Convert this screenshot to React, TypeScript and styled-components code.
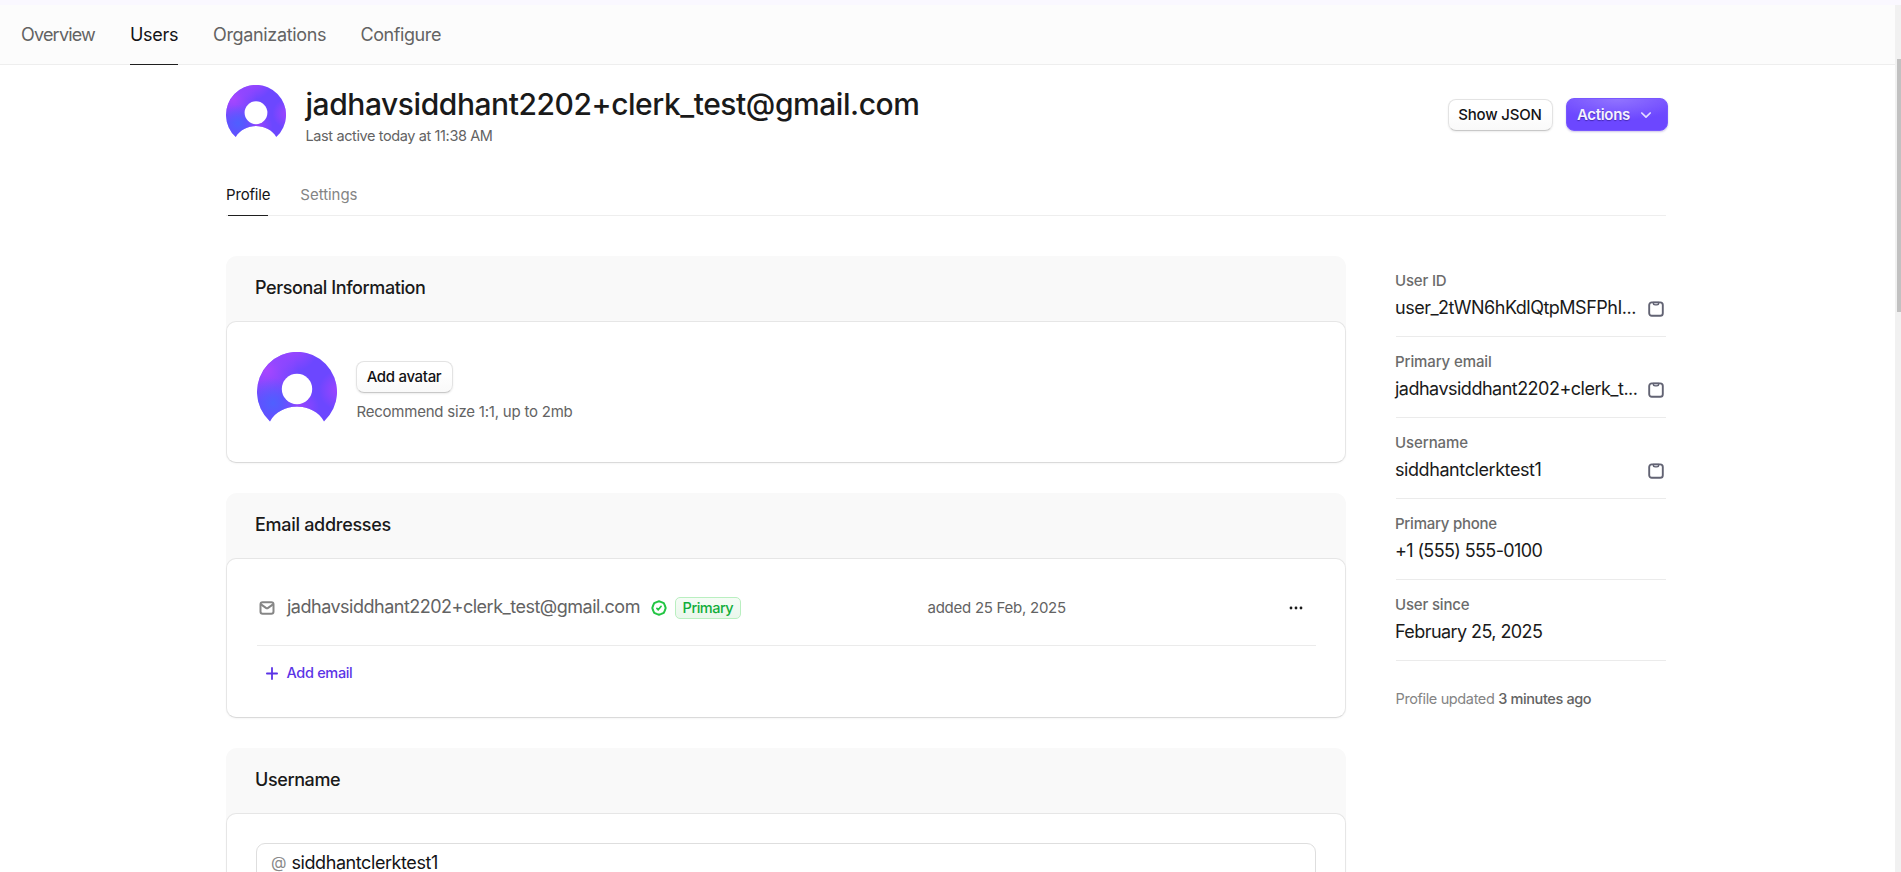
import React, { useId } from 'react';
import styled, { createGlobalStyle } from 'styled-components';

const GlobalStyle = createGlobalStyle`
  *, *::before, *::after { box-sizing: border-box; }
  html, body { margin: 0; height: 100%; overflow: hidden; }
  body {
    background: #fff;
    color: #1a1a1a;
    font-family: Inter, "Liberation Sans", sans-serif;
  }
  button { font-family: inherit; }
`;

interface Tracked {
  $track?: number;
}

const Screen = styled.div`
  display: flex;
  flex-direction: column;
  height: 872px;
  overflow: hidden;
`;

const TopStrip = styled.div`
  flex: none;
  height: 5px;
  background: #faf8ff;
`;

const Viewport = styled.div`
  flex: 1;
  min-height: 0;
  display: flex;
`;

const Page = styled.div`
  flex: 1;
  min-width: 0;
  overflow: hidden;
`;

const ScrollTrack = styled.div`
  flex: none;
  width: 6px;
  padding: 54px 0 0 2px;
  background: #f1f1f1;
`;

const ScrollThumb = styled.div`
  height: 253px;
  background: #c1c1c1;
`;

const NavBar = styled.nav`
  display: flex;
  gap: 35px;
  height: 60px;
  padding-left: 21px;
  background: #fcfcfc;
  border-bottom: 1px solid #eeeeee;
`;

const NavLink = styled.a<Tracked & { $active?: boolean; $width: number }>`
  display: flex;
  align-items: center;
  width: ${(p) => p.$width}px;
  height: 60px;
  padding-bottom: 1px;
  border-bottom: 1px solid ${(p) => (p.$active ? '#1f1f1f' : 'transparent')};
  color: ${(p) => (p.$active ? '#131316' : '#636363')};
  font-size: 18px;
  letter-spacing: ${(p) => p.$track ?? 0}px;
  white-space: nowrap;
`;

const Content = styled.main`
  width: 1440px;
  margin-left: 226px;
  padding-top: 20px;
`;

const ProfileHeader = styled.header`
  display: flex;
  align-items: flex-start;
  height: 100px;
`;

const Identity = styled.div`
  flex: 1;
  padding: 1px 0 0 19.5px;
`;

const Title = styled.h1`
  margin: 0;
  font-size: 30px;
  font-weight: 500;
  line-height: 36px;
  letter-spacing: -0.44px;
`;

const LastActive = styled.p`
  margin: 4px 0 0;
  color: #636363;
  font-size: 14.5px;
  line-height: 20px;
  letter-spacing: -0.386px;
`;

const HeaderActions = styled.div`
  display: flex;
  gap: 13px;
  margin: 13px -2px 0 0;
`;

const OutlineButton = styled.button<Tracked & { $width: number }>`
  display: flex;
  align-items: center;
  justify-content: center;
  width: ${(p) => p.$width}px;
  height: 32px;
  margin-top: 1px;
  padding: 0 1px 1px 0;
  border: 1px solid #e3e3e3;
  border-bottom-color: #c8c8c8;
  border-radius: 8px;
  background: linear-gradient(#fff 40%, #f9f9f9);
  box-shadow: 0 1px 2px rgba(0, 0, 0, 0.08);
  color: #131316;
  font-size: 15px;
  font-weight: 500;
  letter-spacing: ${(p) => p.$track ?? 0}px;
  white-space: nowrap;
`;

const PrimaryButton = styled.button`
  display: flex;
  align-items: center;
  gap: 10px;
  width: 102px;
  height: 33px;
  padding: 0 0 0 10px;
  border: 1px solid #7857ff;
  border-radius: 8px;
  background:
    radial-gradient(ellipse 60px 22px at 50% 0, rgba(255, 255, 255, 0.2), transparent),
    linear-gradient(#7651ff, #6c47ff 60%);
  box-shadow: 0 1px 2px rgba(60, 30, 160, 0.25);
  color: #f4f1ff;
  font-size: 15px;
  font-weight: 600;
  letter-spacing: -0.33px;
  text-shadow: 0 1px 1px rgba(30, 10, 100, 0.5);
`;

const Tabs = styled.div`
  display: flex;
  gap: 30px;
  height: 31px;
  border-bottom: 1px solid #eeeeee;
`;

const Tab = styled.a<Tracked & { $active?: boolean }>`
  display: flex;
  flex-direction: column;
  justify-content: space-between;
  height: 31px;
  color: ${(p) => (p.$active ? '#131316' : '#848484')};
  font-size: 15px;
  line-height: 20px;
  letter-spacing: ${(p) => p.$track ?? 0}px;
  &::after {
    content: '';
    height: 1px;
    margin: 0 2px;
    background: ${(p) => (p.$active ? '#1f1f1f' : 'transparent')};
  }
`;

const Columns = styled.div`
  display: grid;
  grid-template-columns: 1120px 270px;
  gap: 50px;
  margin-top: 40px;
`;

const CardList = styled.div`
  display: flex;
  flex-direction: column;
  gap: 30px;
`;

const Card = styled.section`
  border-radius: 11px;
  background: #f9f9f9;
`;

const CardTitle = styled.h2<Tracked>`
  display: flex;
  align-items: center;
  height: 65px;
  margin: 0;
  padding: 0 29px 2px;
  font-size: 18px;
  font-weight: 500;
  letter-spacing: ${(p) => p.$track ?? 0}px;
`;

const CardBody = styled.div<{ $height: number }>`
  height: ${(p) => p.$height}px;
  padding: 30px 29px 0 30px;
  border: 1px solid #e6e6e6;
  border-bottom-color: #dadada;
  border-radius: 10px;
  background: #fff;
  box-shadow: 0 1px 2px rgba(0, 0, 0, 0.04);
`;

const AvatarRow = styled.div`
  display: flex;
  gap: 19px;
`;

const AvatarControls = styled.div`
  padding-top: 8px;
`;

const Hint = styled.p`
  margin: 9px 0 0 0.5px;
  color: #636363;
  font-size: 15px;
  line-height: 20px;
  letter-spacing: -0.22px;
`;

const EmailRow = styled.div`
  display: grid;
  grid-template-columns: 670.5px 1fr auto;
  height: 57px;
  border-bottom: 1px solid #ebebeb;
`;

const EmailCell = styled.div`
  display: flex;
  align-items: center;
  height: 36px;
`;

const DateCell = styled(EmailCell)`
  height: 37px;
  color: #636363;
  font-size: 15px;
  letter-spacing: -0.26px;
`;

const MenuCell = styled(EmailCell)`
  height: 38px;
  padding-right: 13px;
`;

const EmailText = styled.span`
  margin-left: 12px;
  padding-bottom: 2px;
  color: #636363;
  font-size: 18px;
  letter-spacing: -0.5px;
`;

const IconSlot = styled.span<{ $left: number }>`
  display: flex;
  margin-left: ${(p) => p.$left}px;
  padding-top: 2px;
`;

const Badge = styled.span`
  display: flex;
  align-items: center;
  justify-content: center;
  width: 66px;
  height: 22px;
  margin: 2px 0 0 8px;
  padding-bottom: 2px;
  border: 1px solid #b9efc0;
  border-radius: 5px;
  background: linear-gradient(#f5fcf6, #eaf7ec);
  color: #10ad3a;
  font-size: 14.5px;
  font-weight: 500;
  letter-spacing: -0.49px;
`;

const AddLink = styled.a`
  display: flex;
  align-items: center;
  gap: 8.5px;
  margin: 17px 0 0 9px;
  color: #5b33e6;
  font-size: 14.5px;
  font-weight: 500;
  line-height: 20px;
  letter-spacing: -0.33px;
`;

const UsernameField = styled.div`
  display: flex;
  align-items: center;
  gap: 5px;
  height: 40px;
  margin: -1px 0 0 -1px;
  padding: 0 14px 2px;
  border: 1px solid #dedede;
  border-radius: 9px;
  color: #131316;
  font-size: 18px;
  letter-spacing: -0.422px;
`;

const AtSign = styled.span`
  color: #8a8a8a;
  font-size: 16px;
  letter-spacing: 0;
`;

const Details = styled.aside`
  display: flex;
  flex-direction: column;
`;

const Detail = styled.div`
  height: 81px;
  padding-top: 15px;
  border-bottom: 1px solid #ebebeb;
`;

const DetailLabel = styled.div<Tracked>`
  margin-left: -1px;
  color: #6b6b6b;
  font-size: 15px;
  font-weight: 500;
  line-height: 20px;
  letter-spacing: ${(p) => p.$track ?? 0}px;
`;

const DetailLine = styled.div`
  display: flex;
  align-items: center;
  justify-content: space-between;
  margin: 5px 0 0 -1px;
  padding-right: 2px;
`;

const DetailValue = styled.span<Tracked>`
  font-size: 18px;
  line-height: 24px;
  letter-spacing: ${(p) => p.$track ?? 0}px;
  white-space: nowrap;
`;

const CopyButton = styled.span`
  display: flex;
  padding-top: 1px;
`;

const Updated = styled.p`
  margin: 28px 0 0 -0.5px;
  color: #848484;
  font-size: 14.5px;
  line-height: 20px;
  letter-spacing: -0.37px;
`;

const UpdatedTime = styled.span`
  color: #636363;
  font-weight: 500;
`;

const AvatarSvg = styled.svg`
  flex: none;
  display: block;
`;

function Avatar({ size }: { size: number }) {
  const id = useId().replace(/[^a-zA-Z0-9]/g, '');
  const shape = 'M13 69.4A40 40 0 1 1 67 69.4C62 60 51 54.6 40 54.6S18 60 13 69.4Z';
  return (
    <AvatarSvg width={size} height={size} viewBox="0 0 80 80">
      <defs>
        <radialGradient id={`${id}a`} gradientUnits="userSpaceOnUse" cx="9" cy="18" r="32">
          <stop offset="0" stopColor="#a946ff" />
          <stop offset="1" stopColor="#a946ff" stopOpacity="0" />
        </radialGradient>
        <radialGradient id={`${id}b`} gradientUnits="userSpaceOnUse" cx="16" cy="51" r="25">
          <stop offset="0" stopColor="#4f60ff" />
          <stop offset="1" stopColor="#4f60ff" stopOpacity="0" />
        </radialGradient>
        <radialGradient id={`${id}c`} gradientUnits="userSpaceOnUse" cx="82" cy="38" r="20">
          <stop offset="0" stopColor="#a044ff" />
          <stop offset="1" stopColor="#a044ff" stopOpacity="0" />
        </radialGradient>
        <radialGradient id={`${id}d`} gradientUnits="userSpaceOnUse" cx="43" cy="55" r="19">
          <stop offset="0" stopColor="#9a44ff" />
          <stop offset="1" stopColor="#9a44ff" stopOpacity="0" />
        </radialGradient>
        <radialGradient id={`${id}e`} gradientUnits="userSpaceOnUse" cx="36" cy="-6" r="26">
          <stop offset="0" stopColor="#a544ff" />
          <stop offset="1" stopColor="#a544ff" stopOpacity="0" />
        </radialGradient>
      </defs>
      <path d={shape} fill="#6c47ff" />
      {['e', 'c', 'd', 'a', 'b'].map((key) => (
        <path key={key} d={shape} fill={`url(#${id}${key})`} />
      ))}
      <circle cx="40" cy="37" r="15.2" fill="#fff" />
    </AvatarSvg>
  );
}

const ChevronIcon = () => (
  <svg width="12" height="12" viewBox="0 0 12 12" fill="none" stroke="#e4ddff" strokeWidth="1.7" strokeLinecap="round" strokeLinejoin="round">
    <path d="M1.8 4 6 8.2 10.2 4" />
  </svg>
);

const MailIcon = () => (
  <svg width="16" height="14" viewBox="0 0 16 14" fill="none" stroke="#868686" strokeWidth="2" strokeLinejoin="round">
    <rect x="1.5" y="1.2" width="13" height="11.6" rx="2.2" />
    <path d="M2 3.4 6.9 6.9a1.9 1.9 0 0 0 2.2 0L14 3.4" />
  </svg>
);

const VerifiedIcon = () => (
  <svg width="16" height="16" viewBox="0 0 16 16" fill="none" stroke="#22c543" strokeWidth="2" strokeLinecap="round" strokeLinejoin="round">
    <path d="M8 1.3 10.4 2.1 12.8 3.2 13.9 5.6 14.7 8 13.9 10.4 12.8 12.8 10.4 13.9 8 14.7 5.6 13.9 3.2 12.8 2.1 10.4 1.3 8 2.1 5.6 3.2 3.2 5.6 2.1Z" />
    <path d="M5.9 8.4 7.3 9.8 10.1 6.3" strokeWidth="1.7" />
  </svg>
);

const PlusIcon = () => (
  <svg width="12" height="14" viewBox="0 0 12 14" stroke="#5b33e6" strokeWidth="1.8" strokeLinecap="round">
    <path d="M6 2v11M.9 7.5h10.2" />
  </svg>
);

const DotsIcon = () => (
  <svg width="14" height="4" viewBox="0 0 14 4" fill="#1a1a1a">
    <circle cx="2" cy="2" r="1.4" />
    <circle cx="7" cy="2" r="1.4" />
    <circle cx="12" cy="2" r="1.4" />
  </svg>
);

const ClipboardIcon = () => (
  <svg width="16" height="16" viewBox="0 0 16 16" fill="none" stroke="#626373" strokeLinecap="round" strokeLinejoin="round">
    <rect x="1.2" y="1.4" width="13.6" height="13.4" rx="2.6" strokeWidth="1.9" />
    <path d="M5.3 1.4v.7c0 1 .8 1.8 1.8 1.8h1.8c1 0 1.8-.8 1.8-1.8v-.7Z" fill="#c9cad3" strokeWidth="1.4" />
  </svg>
);

const navItems = [
  { label: 'Overview', width: 74, track: -0.8 },
  { label: 'Users', width: 48, track: -0.3, active: true },
  { label: 'Organizations', width: 112.5, track: -0.34 },
  { label: 'Configure', width: 80, track: -0.42 },
];

const details = [
  { label: 'User ID', labelTrack: -0.18, value: 'user_2tWN6hKdlQtpMSFPhI...', track: -0.5, copy: true },
  { label: 'Primary email', labelTrack: -0.11, value: 'jadhavsiddhant2202+clerk_t...', track: -0.51, copy: true },
  { label: 'Username', labelTrack: -0.08, value: 'siddhantclerktest1', track: -0.422, copy: true },
  { label: 'Primary phone', labelTrack: -0.25, value: '+1 (555) 555-0100', track: -0.622 },
  { label: 'User since', labelTrack: -0.18, value: 'February 25, 2025', track: -0.574 },
];

const email = 'jadhavsiddhant2202+clerk_test@gmail.com';

export default function App() {
  return (
    <Screen>
      <GlobalStyle />
      <TopStrip />
      <Viewport>
        <Page>
          <NavBar>
            {navItems.map((item) => (
              <NavLink key={item.label} $width={item.width} $track={item.track} $active={item.active}>
                {item.label}
              </NavLink>
            ))}
          </NavBar>
          <Content>
            <ProfileHeader>
              <Avatar size={60} />
              <Identity>
                <Title>{email}</Title>
                <LastActive>Last active today at 11:38 AM</LastActive>
              </Identity>
              <HeaderActions>
                <OutlineButton $width={105} $track={-0.175}>Show JSON</OutlineButton>
                <PrimaryButton>
                  Actions
                  <ChevronIcon />
                </PrimaryButton>
              </HeaderActions>
            </ProfileHeader>
            <Tabs>
              <Tab $active $track={-0.17}>Profile</Tab>
              <Tab $track={-0.04}>Settings</Tab>
            </Tabs>
            <Columns>
              <CardList>
                <Card>
                  <CardTitle $track={-0.411}>Personal Information</CardTitle>
                  <CardBody $height={142}>
                    <AvatarRow>
                      <Avatar size={80} />
                      <AvatarControls>
                        <OutlineButton $width={97} $track={-0.32}>Add avatar</OutlineButton>
                        <Hint>Recommend size 1:1, up to 2mb</Hint>
                      </AvatarControls>
                    </AvatarRow>
                  </CardBody>
                </Card>
                <Card>
                  <CardTitle $track={-0.29}>Email addresses</CardTitle>
                  <CardBody $height={160}>
                    <EmailRow>
                      <EmailCell>
                        <IconSlot $left={2}><MailIcon /></IconSlot>
                        <EmailText>{email}</EmailText>
                        <IconSlot $left={11}><VerifiedIcon /></IconSlot>
                        <Badge>Primary</Badge>
                      </EmailCell>
                      <DateCell>added 25 Feb, 2025</DateCell>
                      <MenuCell><DotsIcon /></MenuCell>
                    </EmailRow>
                    <AddLink>
                      <PlusIcon />
                      Add email
                    </AddLink>
                  </CardBody>
                </Card>
                <Card>
                  <CardTitle $track={-0.403}>Username</CardTitle>
                  <CardBody $height={142}>
                    <UsernameField>
                      <AtSign>@</AtSign>
                      siddhantclerktest1
                    </UsernameField>
                  </CardBody>
                </Card>
              </CardList>
              <Details>
                {details.map((d) => (
                  <Detail key={d.label}>
                    <DetailLabel $track={d.labelTrack}>{d.label}</DetailLabel>
                    <DetailLine>
                      <DetailValue $track={d.track}>{d.value}</DetailValue>
                      {d.copy && <CopyButton><ClipboardIcon /></CopyButton>}
                    </DetailLine>
                  </Detail>
                ))}
                <Updated>
                  Profile updated <UpdatedTime>3 minutes ago</UpdatedTime>
                </Updated>
              </Details>
            </Columns>
          </Content>
        </Page>
        <ScrollTrack>
          <ScrollThumb />
        </ScrollTrack>
      </Viewport>
    </Screen>
  );
}
